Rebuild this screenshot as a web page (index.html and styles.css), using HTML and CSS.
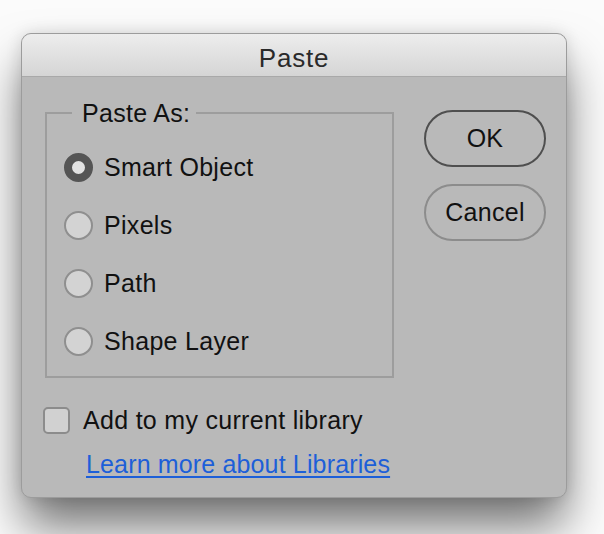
FILE: index.html
```html
<!DOCTYPE html>
<html>
<head>
<meta charset="utf-8">
<title>Paste</title>
<link rel="stylesheet" href="styles.css">
</head>
<body>
<div class="dialog">
  <div class="titlebar">Paste</div>
  <div class="body">
    <div class="top">
      <fieldset class="group">
        <legend>Paste As:</legend>
        <label class="row"><span class="radio checked"></span>Smart Object</label>
        <label class="row"><span class="radio"></span>Pixels</label>
        <label class="row"><span class="radio"></span>Path</label>
        <label class="row"><span class="radio"></span>Shape Layer</label>
      </fieldset>
      <div class="buttons">
        <button class="btn default">OK</button>
        <button class="btn">Cancel</button>
      </div>
    </div>
    <label class="check-row"><span class="checkbox"></span>Add to my current library</label>
    <a class="link" href="#">Learn more about Libraries</a>
  </div>
</div>
</body>
</html>
```

FILE: styles.css
```css
html, body {
  margin: 0;
  padding: 0;
}
body {
  width: 604px;
  height: 534px;
  overflow: hidden;
  background: #fbfbfb;
  font-family: "Liberation Sans", Arial, sans-serif;
  font-size: 25px;
  letter-spacing: 0.3px;
  color: #111111;
}
.dialog {
  margin: 33px 0 0 21px;
  width: 546px;
  height: 465px;
  box-sizing: border-box;
  border-radius: 10px;
  background: #b9b9b9;
  border: 1px solid #9c9c9c;
  box-shadow: 0 30px 48px -2px rgba(0, 0, 0, 0.55), 0 0 16px rgba(0, 0, 0, 0.12);
  overflow: hidden;
  display: flex;
  flex-direction: column;
}
.titlebar {
  height: 43px;
  box-sizing: border-box;
  border-bottom: 1px solid #a9a9a9;
  background: linear-gradient(#ededed, #d5d5d5);
  display: flex;
  align-items: center;
  justify-content: center;
  font-size: 26px;
  letter-spacing: 0.8px;
  color: #2a2a2a;
  padding-top: 6px;
}
.body {
  padding: 21px 20px 0 23px;
  display: flex;
  flex-direction: column;
}
.top {
  display: flex;
  align-items: flex-start;
}
.group {
  width: 349px;
  box-sizing: border-box;
  margin: 0;
  border: 2px solid #9d9d9d;
  padding: 10px 0 6px 17px;
}
.group legend {
  margin-left: 8px;
  padding: 0 6px 0 10px;
  line-height: 30px;
}
.row {
  height: 58px;
  display: flex;
  align-items: center;
}
.radio {
  width: 29px;
  height: 29px;
  box-sizing: border-box;
  border-radius: 50%;
  border: 2px solid #8f8f8f;
  background: #d3d3d3;
  margin-right: 11px;
  flex: none;
}
.radio.checked {
  border: 8px solid #555555;
  background: #e2e2e2;
}
.buttons {
  margin-left: auto;
  margin-top: 12px;
  display: flex;
  flex-direction: column;
  gap: 17px;
}
.btn {
  width: 122px;
  height: 57px;
  border-radius: 29px;
  background: transparent;
  border: 2px solid #8c8c8c;
  font-family: inherit;
  font-size: 25px;
  letter-spacing: 0.3px;
  color: #111111;
  padding: 0;
}
.btn.default {
  border-color: #4f4f4f;
}
.check-row {
  margin-top: 25px;
  margin-left: -2px;
  height: 34px;
  display: flex;
  align-items: center;
}
.checkbox {
  width: 27px;
  height: 27px;
  box-sizing: border-box;
  border: 2px solid #8c8c8c;
  border-radius: 5px;
  background: #d1d1d1;
  margin-right: 13px;
  flex: none;
}
.link {
  margin-top: 10px;
  margin-left: 41px;
  align-self: flex-start;
  line-height: 34px;
  color: #1d5fd8;
  text-decoration: underline;
  text-underline-offset: 3px;
  letter-spacing: 0.15px;
}
```
